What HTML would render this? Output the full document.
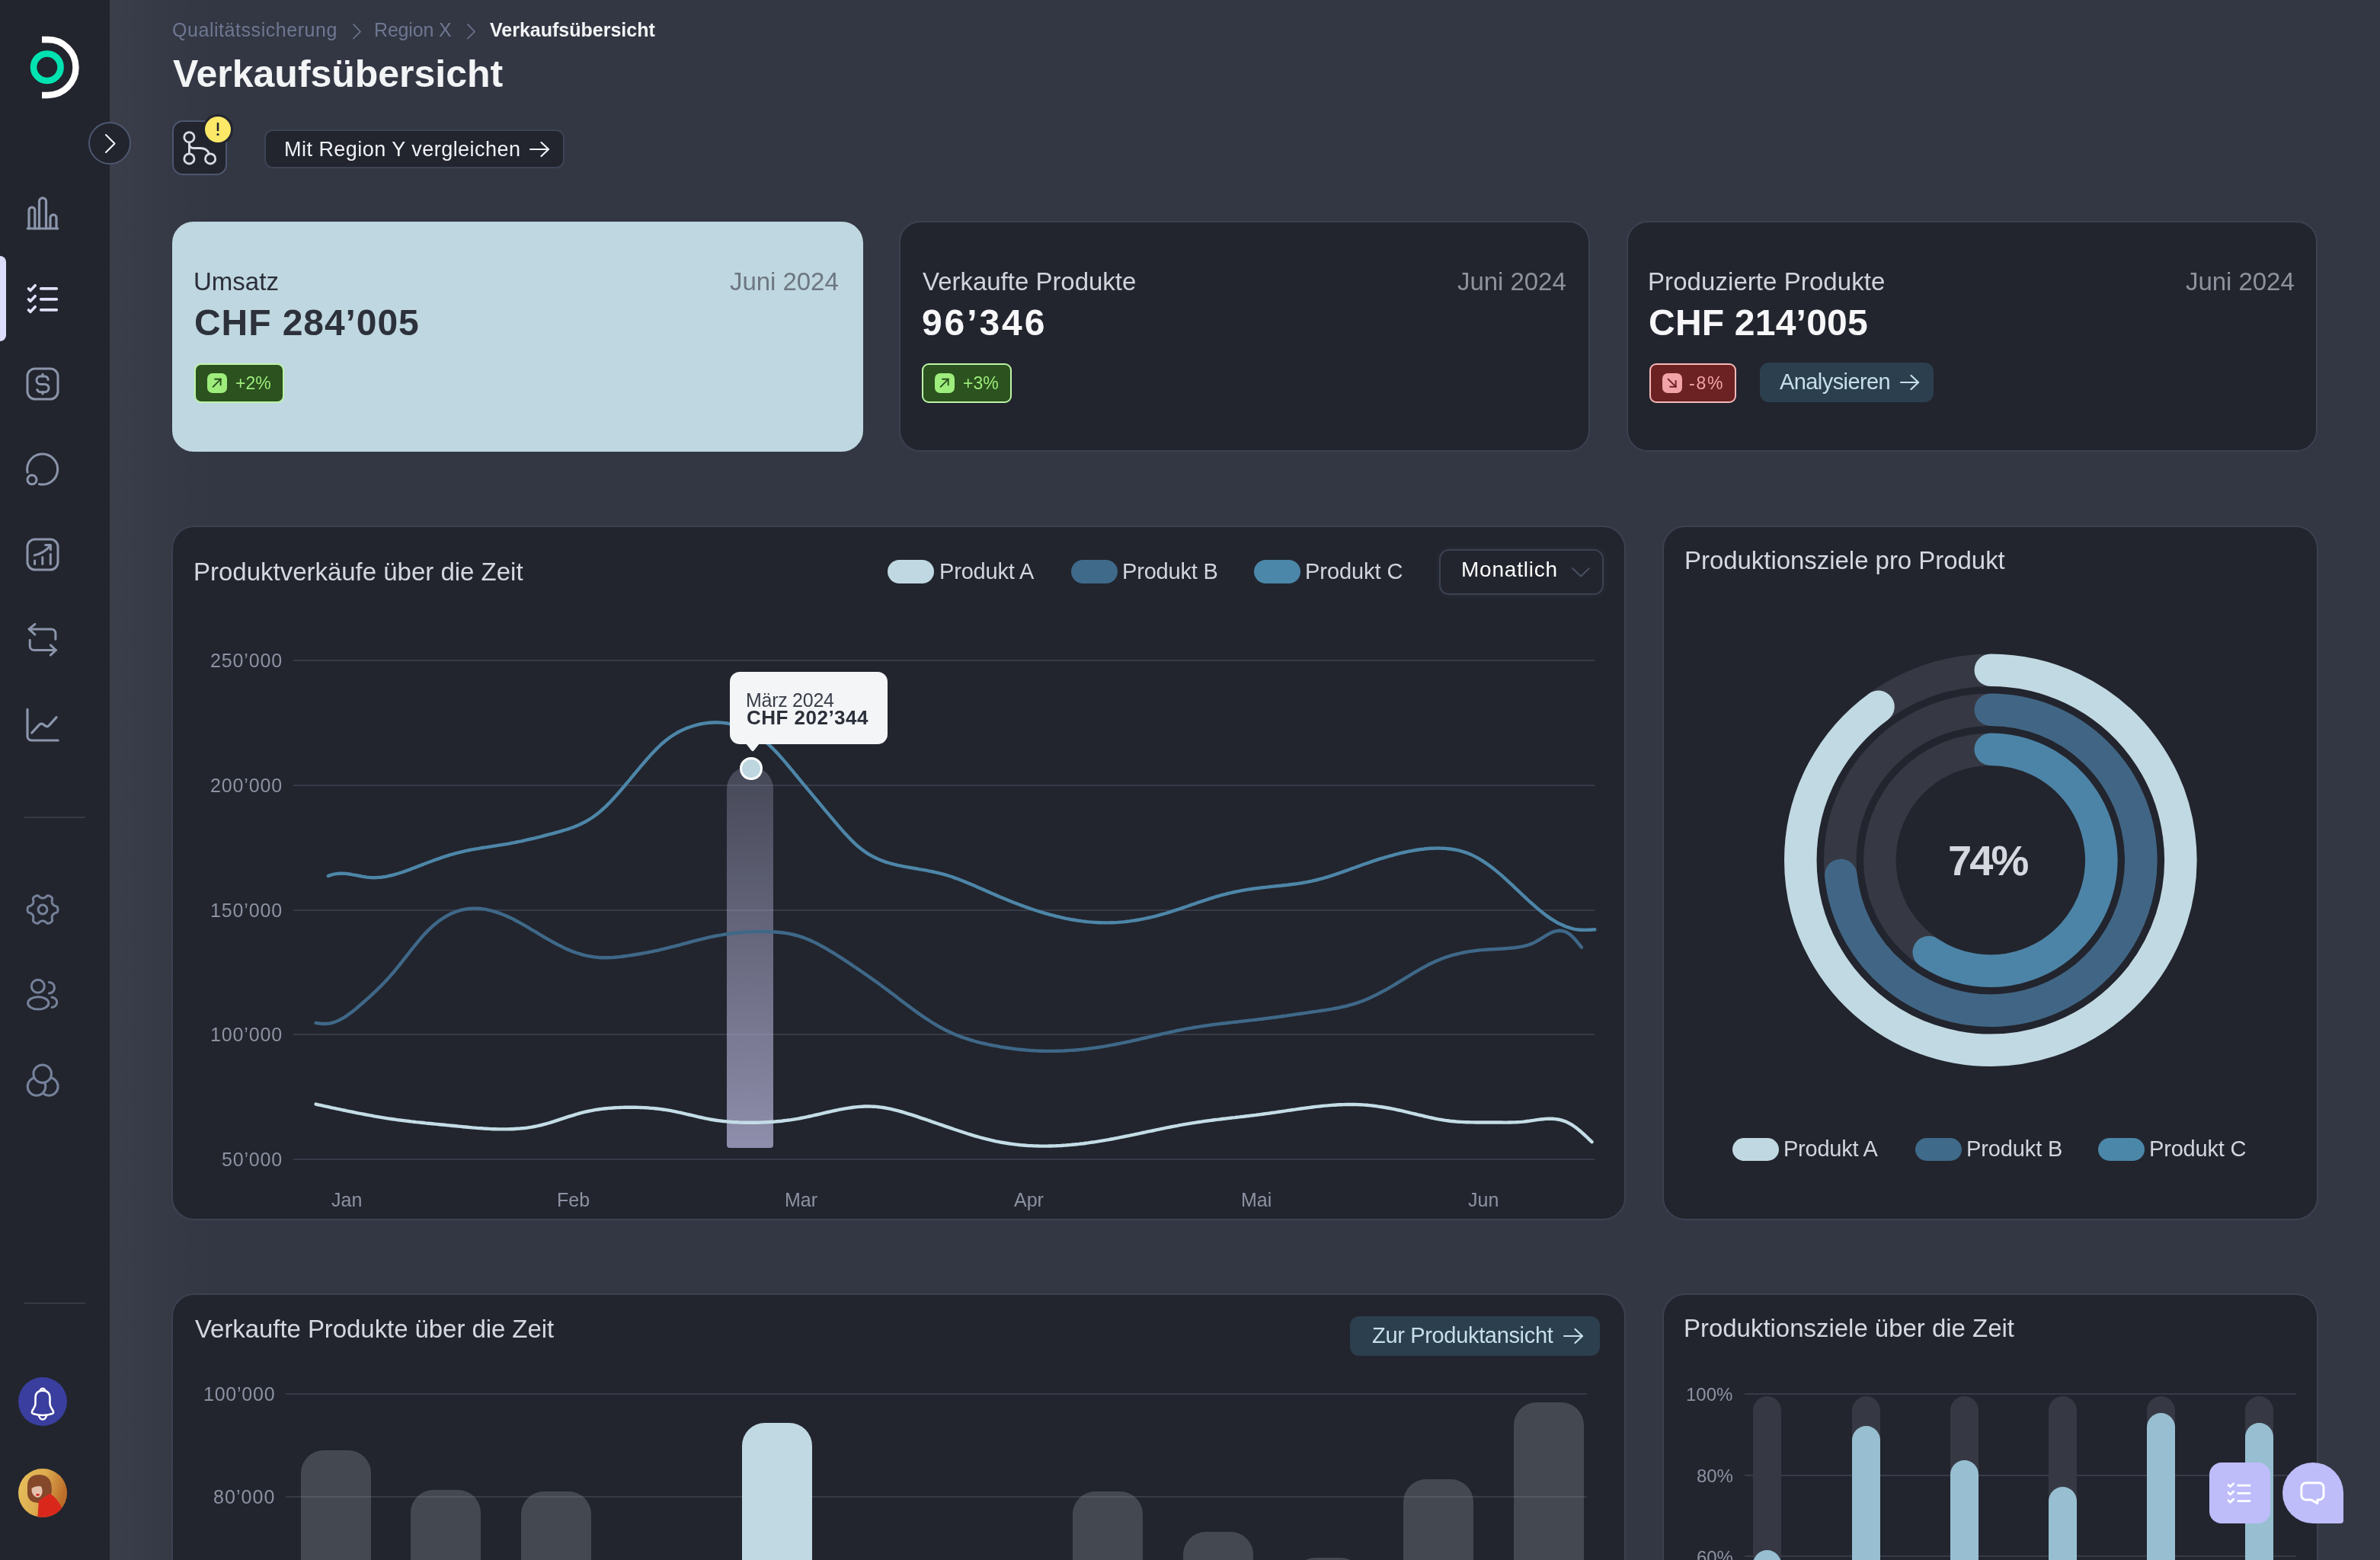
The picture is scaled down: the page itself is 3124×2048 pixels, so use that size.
<!DOCTYPE html>
<html><head><meta charset="utf-8"><title>Verkaufsübersicht</title>
<style>
html,body{margin:0;padding:0;}
body{width:3124px;height:2048px;overflow:hidden;position:relative;background:#333743;font-family:"Liberation Sans", sans-serif;}
.t{position:absolute;white-space:nowrap;line-height:1;will-change:transform;}
div{box-sizing:content-box;}
</style></head><body>
<div style="position:absolute;left:0;top:0;width:144px;height:2048px;background:#22252d"></div><div style="position:absolute;left:144px;top:0;width:140px;height:2048px;background:linear-gradient(90deg,rgba(255,255,255,0.04) 0%,rgba(255,255,255,0.015) 45%,rgba(255,255,255,0) 100%)"></div><svg style="position:absolute;left:0;top:0" width="144" height="160" viewBox="0 0 144 160"><circle cx="61.8" cy="88.2" r="17.75" fill="none" stroke="#00e3b1" stroke-width="8.6"/><path d="M55,52 H63 A36.5,36.5 0 0 1 63,125 H55" fill="none" stroke="#ffffff" stroke-width="8.4"/></svg><div style="position:absolute;left:0;top:336px;width:8px;height:112px;background:#dcdcfb;border-radius:0 8px 8px 0"></div><svg style="position:absolute;left:32.0px;top:256.0px" width="48.0" height="48.0" viewBox="0 0 24 24" fill="none" stroke="#8b95ab" stroke-width="1.6" stroke-linecap="round" stroke-linejoin="round"><path d="M2.1 22H21.9"/><path d="M3 22V10a1.95 1.95 0 0 1 3.9 0V22"/><path d="M9.75 22V4.15a2.25 2.25 0 0 1 4.5 0V22"/><path d="M17 22V14.95a2 2 0 0 1 4 0V22"/></svg><svg style="position:absolute;left:32.0px;top:368.0px" width="48.0" height="48.0" viewBox="0 0 24 24" fill="none" stroke="#e0e0fb" stroke-width="1.8" stroke-linecap="round" stroke-linejoin="round"><path d="M2.75 5.45L4 6.7L7.1 3.35"/><path d="M2.75 12.45L4 13.7L7.1 10.35"/><path d="M2.75 19.45L4 20.7L7.1 17.35"/><path d="M10.85 5.45H21.15"/><path d="M10.85 12.45H21.15"/><path d="M10.85 19.45H21.15"/></svg><svg style="position:absolute;left:32.0px;top:480.0px" width="48.0" height="48.0" viewBox="0 0 24 24" fill="none" stroke="#8b95ab" stroke-width="1.5" stroke-linecap="round" stroke-linejoin="round"><rect x="2" y="2" width="20" height="20" rx="5"/><path d="M15.6 9.2a2.6 2.6 0 0 0-2.4-2.2h-2.6a2.6 2.6 0 0 0 0 5.2h2.8a2.6 2.6 0 0 1 0 5.2h-2.6a2.6 2.6 0 0 1-2.4-1.6"/><path d="M12 5.6v1.4m0 10.4v1.1"/></svg><svg style="position:absolute;left:32.0px;top:592.0px" width="48.0" height="48.0" viewBox="0 0 24 24" fill="none" stroke="#8b95ab" stroke-width="1.5" stroke-linecap="round" stroke-linejoin="round"><path d="M2.05 14.05A10 10 0 1 1 9.7 21.8"/><circle cx="5" cy="18.85" r="3"/></svg><svg style="position:absolute;left:32.0px;top:704.0px" width="48.0" height="48.0" viewBox="0 0 24 24" fill="none" stroke="#8b95ab" stroke-width="1.5" stroke-linecap="round" stroke-linejoin="round"><rect x="2" y="2" width="20" height="20" rx="5"/><path d="M6.8 16V18.25"/><path d="M11.9 13.8V18.25"/><path d="M17.15 11.8V18.25"/><path d="M6.65 12.45Q13 11 16.85 6.35"/><path d="M13.8 5.8H17.2V8.9"/></svg><svg style="position:absolute;left:32.0px;top:816.0px" width="48.0" height="48.0" viewBox="0 0 24 24" fill="none" stroke="#8b95ab" stroke-width="1.5" stroke-linecap="round" stroke-linejoin="round"><path d="M6.95 1.65L3.05 4.95L6.95 8.55"/><path d="M3.05 4.95H17.7a2.75 2.75 0 0 1 2.75 2.75V11.6"/><path d="M3.6 12.15V16a2.75 2.75 0 0 0 2.75 2.75H20.7"/><path d="M17.15 15.45L20.7 18.75L17.15 22.05"/></svg><svg style="position:absolute;left:32.0px;top:928.0px" width="48.0" height="48.0" viewBox="0 0 24 24" fill="none" stroke="#8b95ab" stroke-width="1.6" stroke-linecap="round" stroke-linejoin="round"><path d="M2 1.7V19.3a2.7 2.7 0 0 0 2.7 2.7H22.1"/><path d="M4.9 17L9.6 11.9Q11 10.4 12.6 11.6L13.8 12.5Q15 13.4 16.2 12.2L21.05 6.8"/></svg><div style="position:absolute;left:32px;top:1072px;width:80px;height:2px;background:#363a46"></div><div style="position:absolute;left:32px;top:1710px;width:80px;height:2px;background:#363a46"></div><svg style="position:absolute;left:32.0px;top:1170.0px" width="48.0" height="48.0" viewBox="0 0 24 24" fill="none" stroke="#76829b" stroke-width="1.5" stroke-linecap="round" stroke-linejoin="round"><path d="M12.00 4.55 L12.26 4.53 L12.53 4.49 L12.80 4.41 L13.08 4.30 L13.38 4.16 L13.70 4.00 L14.05 3.78 L14.48 3.36 L14.92 3.01 L15.33 2.86 L15.69 2.86 L16.03 2.95 L16.36 3.07 L16.67 3.22 L16.97 3.38 L17.27 3.56 L17.56 3.76 L17.83 3.98 L18.07 4.24 L18.25 4.55 L18.33 4.97 L18.24 5.53 L18.09 6.12 L18.08 6.53 L18.10 6.89 L18.13 7.21 L18.18 7.51 L18.24 7.79 L18.34 8.04 L18.45 8.27 L18.60 8.49 L18.77 8.70 L18.97 8.90 L19.21 9.09 L19.48 9.28 L19.78 9.47 L20.14 9.67 L20.72 9.83 L21.25 10.03 L21.58 10.31 L21.76 10.63 L21.86 10.96 L21.91 11.31 L21.94 11.65 L21.95 12.00 L21.94 12.35 L21.91 12.69 L21.86 13.04 L21.76 13.37 L21.58 13.69 L21.25 13.97 L20.72 14.17 L20.14 14.33 L19.78 14.53 L19.48 14.72 L19.21 14.91 L18.97 15.10 L18.77 15.30 L18.60 15.51 L18.45 15.72 L18.34 15.96 L18.24 16.21 L18.18 16.49 L18.13 16.79 L18.10 17.11 L18.08 17.47 L18.09 17.88 L18.24 18.47 L18.33 19.03 L18.25 19.45 L18.07 19.76 L17.83 20.02 L17.56 20.24 L17.27 20.44 L16.97 20.62 L16.67 20.78 L16.36 20.93 L16.03 21.05 L15.69 21.14 L15.33 21.14 L14.92 20.99 L14.48 20.64 L14.05 20.22 L13.70 20.00 L13.38 19.84 L13.08 19.70 L12.80 19.59 L12.53 19.51 L12.26 19.47 L12.00 19.45 L11.74 19.47 L11.47 19.51 L11.20 19.59 L10.92 19.70 L10.62 19.84 L10.30 20.00 L9.95 20.22 L9.52 20.64 L9.08 20.99 L8.67 21.14 L8.31 21.14 L7.97 21.05 L7.64 20.93 L7.33 20.78 L7.02 20.62 L6.73 20.44 L6.44 20.24 L6.17 20.02 L5.93 19.76 L5.75 19.45 L5.67 19.03 L5.76 18.47 L5.91 17.88 L5.92 17.47 L5.90 17.11 L5.87 16.79 L5.82 16.49 L5.76 16.21 L5.66 15.96 L5.55 15.73 L5.40 15.51 L5.23 15.30 L5.03 15.10 L4.79 14.91 L4.52 14.72 L4.22 14.53 L3.86 14.33 L3.28 14.17 L2.75 13.97 L2.42 13.69 L2.24 13.37 L2.14 13.04 L2.09 12.69 L2.06 12.35 L2.05 12.00 L2.06 11.65 L2.09 11.31 L2.14 10.96 L2.24 10.63 L2.42 10.31 L2.75 10.03 L3.28 9.83 L3.86 9.67 L4.22 9.47 L4.52 9.28 L4.79 9.09 L5.03 8.90 L5.23 8.70 L5.40 8.49 L5.55 8.27 L5.66 8.04 L5.76 7.79 L5.82 7.51 L5.87 7.21 L5.90 6.89 L5.92 6.53 L5.91 6.12 L5.76 5.53 L5.67 4.97 L5.75 4.55 L5.93 4.24 L6.17 3.98 L6.44 3.76 L6.73 3.56 L7.02 3.38 L7.33 3.22 L7.64 3.07 L7.97 2.95 L8.31 2.86 L8.67 2.86 L9.08 3.01 L9.52 3.36 L9.95 3.78 L10.30 4.00 L10.62 4.16 L10.92 4.30 L11.20 4.41 L11.47 4.49 L11.74 4.53 L12.00 4.55Z"/><circle cx="12" cy="12" r="2.95"/></svg><svg style="position:absolute;left:32.0px;top:1281.0px" width="48.0" height="48.0" viewBox="0 0 24 24" fill="none" stroke="#76829b" stroke-width="1.5" stroke-linecap="round" stroke-linejoin="round"><circle cx="8.9" cy="6.85" r="4.25"/><ellipse cx="9.1" cy="17.95" rx="6.8" ry="4.1"/><path d="M16.15 4.2A3.6 3.65 0 0 1 16.15 11.5"/><path d="M18.05 14.1A3.5 3.33 0 0 1 18.05 20.75"/></svg><svg style="position:absolute;left:32.0px;top:1394.0px" width="48.0" height="48.0" viewBox="0 0 24 24" fill="none" stroke="#76829b" stroke-width="1.5" stroke-linecap="round" stroke-linejoin="round"><circle cx="16.15" cy="16.2" r="5.9" fill="#22252d"/><circle cx="8" cy="16.2" r="5.9" fill="#22252d"/><circle cx="11.85" cy="7.85" r="5.9" fill="#22252d"/></svg><div style="position:absolute;left:24px;top:1808px;width:64px;height:64px;border-radius:50%;background:#3a3e9e"></div><svg style="position:absolute;left:24px;top:1808px" width="64" height="64" viewBox="0 0 64 64" fill="none" stroke="#ffffff" stroke-width="2.6" stroke-linejoin="round" stroke-linecap="round"><path d="M29 16.5Q32 13 35 16.5"/><path d="M22.5 34.5V27.5Q22.5 17.8 32 17.5Q41.5 17.8 41.5 27.5V34.5Q41.5 37.5 43.5 40.5L45.8 44.5Q47.2 47.3 43.5 48.3Q38.5 50 32 50Q25.5 50 20.5 48.3Q16.8 47.3 18.2 44.5L20.5 40.5Q22.5 37.5 22.5 34.5Z"/><path d="M27 50.5Q28.5 55.5 32 55.5Q35.5 55.5 37 50.5"/></svg><svg style="position:absolute;left:24px;top:1928px" width="64" height="64" viewBox="0 0 64 64"><defs><clipPath id="avc"><circle cx="32" cy="32" r="32"/></clipPath><linearGradient id="avg" x1="0" y1="0" x2="1" y2="0.3"><stop offset="0" stop-color="#e9c25f"/><stop offset="0.55" stop-color="#dcaa4e"/><stop offset="1" stop-color="#bd6e2a"/></linearGradient></defs><g clip-path="url(#avc)"><rect width="64" height="64" fill="url(#avg)"/><path d="M12 23Q12 8 27.5 8Q42 8.5 43.5 22Q45 34 40.5 40Q35 45.5 25 45Q13 44 12 34Z" fill="#85482a"/><ellipse cx="24.5" cy="28.5" rx="7" ry="9.5" fill="#e5c2ad" transform="rotate(-12 24.5 28.5)"/><path d="M16.5 22Q24 14.5 34 19.5L34.5 25Q26 20.5 17 26Z" fill="#85482a"/><ellipse cx="25.5" cy="34.4" rx="2.5" ry="1.4" fill="#d4271f"/><path d="M25.3 66L26.8 43Q31 38.5 41.5 33Q50 37 57.5 52L54 66Z" fill="#d9271c"/></g></svg><svg style="position:absolute;left:461px;top:29.5px" width="16" height="22" viewBox="0 0 16 22" fill="none" stroke="#6e7791" stroke-width="1.7" stroke-linecap="round" stroke-linejoin="round"><path d="M3 2l9 9.5l-9 9"/></svg><svg style="position:absolute;left:611px;top:29.5px" width="16" height="22" viewBox="0 0 16 22" fill="none" stroke="#6e7791" stroke-width="1.7" stroke-linecap="round" stroke-linejoin="round"><path d="M3 2l9 9.5l-9 9"/></svg><div style="position:absolute;left:116px;top:160px;width:52px;height:52px;border-radius:50%;background:#22252e;border:2px solid #4d576f"></div><svg style="position:absolute;left:130px;top:170px" width="30" height="36" viewBox="0 0 30 36" fill="none" stroke="#f5f5f7" stroke-width="2" stroke-linecap="round" stroke-linejoin="round"><path d="M9 7l11.5 11.5L9 30"/></svg><div style="position:absolute;left:226px;top:158px;width:68px;height:68px;border-radius:14px;background:#22252e;border:2px solid #4d576f"></div><svg style="position:absolute;left:226px;top:158px" width="72" height="72" viewBox="0 0 72 72" fill="none" stroke="#d9dbe2" stroke-width="2.8" stroke-linecap="round" stroke-linejoin="round"><circle cx="22.4" cy="22.2" r="6.6"/><circle cx="22.4" cy="50.4" r="6.6"/><circle cx="50.1" cy="50.4" r="6.6"/><path d="M22.4 28.8V43.8"/><path d="M22.4 31c0 3.5 2 5.5 6 5.5h8.5c5.5 0 9.5 2 11.5 7.4"/></svg><div style="position:absolute;left:266.3px;top:150px;width:40px;height:40px;border-radius:50%;background:#22252e"></div><div style="position:absolute;left:269.3px;top:153px;width:34px;height:34px;border-radius:50%;background:#fde868"></div><svg style="position:absolute;left:269.3px;top:153px" width="34" height="34" viewBox="0 0 34 34"><path d="M17 9v9" stroke="#22252e" stroke-width="2.6" stroke-linecap="round"/><circle cx="17" cy="23.5" r="1.6" fill="#22252e"/></svg><div style="position:absolute;left:346.5px;top:170px;width:390.5px;height:47px;border-radius:11px;background:#22252e;border:2px solid #3e4454"></div><svg style="position:absolute;left:694.0px;top:184.5px" width="28.0" height="22" viewBox="-2 -2 28.0 22" fill="none" stroke="#f0f1f5" stroke-width="2.2" stroke-linecap="round" stroke-linejoin="round"><path d="M0 9.0H24"/><path d="M14.5 0.0L24 9.0L14.5 18.0"/></svg><div style="position:absolute;left:226px;top:291px;width:903px;height:297.5px;border-radius:28px;background:#bfd7e0;border:2px solid #bfd7e0"></div><div style="position:absolute;left:1179.5px;top:290px;width:903px;height:299px;border-radius:28px;background:#22252e;border:2px solid #3c4151"></div><div style="position:absolute;left:2135px;top:290px;width:903px;height:299px;border-radius:28px;background:#22252e;border:2px solid #3c4151"></div><div style="position:absolute;left:255px;top:476.5px;width:113.5px;height:48px;border-radius:9px;background:#2b521f;border:2px solid #bdf5a6"></div><div style="position:absolute;left:272.2px;top:490px;width:25.5px;height:25.5px;border-radius:7px;background:#9eed7c"></div><svg style="position:absolute;left:272.2px;top:490px" width="25.5" height="25.5" viewBox="0 0 26 26" fill="none" stroke="#2b521f" stroke-width="2" stroke-linecap="square"><path d="M8 18L18 8"/><path d="M10.5 8H18v7.5"/></svg><div style="position:absolute;left:1210px;top:476.5px;width:113.5px;height:48px;border-radius:9px;background:#2b521f;border:2px solid #bdf5a6"></div><div style="position:absolute;left:1227.2px;top:490px;width:25.5px;height:25.5px;border-radius:7px;background:#9eed7c"></div><svg style="position:absolute;left:1227.2px;top:490px" width="25.5" height="25.5" viewBox="0 0 26 26" fill="none" stroke="#2b521f" stroke-width="2" stroke-linecap="square"><path d="M8 18L18 8"/><path d="M10.5 8H18v7.5"/></svg><div style="position:absolute;left:2165px;top:476.5px;width:109.6px;height:48px;border-radius:9px;background:#6c2222;border:2px solid #f6b9b9"></div><div style="position:absolute;left:2182.2px;top:490px;width:25.5px;height:25.5px;border-radius:7px;background:#f2a3a8"></div><svg style="position:absolute;left:2182.2px;top:490px" width="25.5" height="25.5" viewBox="0 0 26 26" fill="none" stroke="#6c2222" stroke-width="2" stroke-linecap="square"><path d="M8 8l10 10"/><path d="M18 10.5V18h-7.5"/></svg><div style="position:absolute;left:2310px;top:476px;width:228px;height:52px;border-radius:12px;background:#2c3f4e"></div><svg style="position:absolute;left:2493.0px;top:490.5px" width="27.0" height="22" viewBox="-2 -2 27.0 22" fill="none" stroke="#c6dfe9" stroke-width="2.2" stroke-linecap="round" stroke-linejoin="round"><path d="M0 9.0H23"/><path d="M13.5 0.0L23 9.0L13.5 18.0"/></svg><div style="position:absolute;left:225px;top:690px;width:1905px;height:908px;border-radius:30px;background:#22252e;border:2px solid #3c4151"></div><div style="position:absolute;left:1165.3px;top:735px;width:61px;height:31px;border-radius:16px;background:#c0d8e1"></div><div style="position:absolute;left:1405.7px;top:735px;width:61px;height:31px;border-radius:16px;background:#3f6a8a"></div><div style="position:absolute;left:1645.6px;top:735px;width:61px;height:31px;border-radius:16px;background:#4b87a9"></div><div style="position:absolute;left:1888.6px;top:721px;width:212px;height:55.6px;border-radius:13px;background:#22252e;border:2px solid #3c4252;box-shadow:0 0 10px rgba(120,130,150,0.12)"></div><svg style="position:absolute;left:2060px;top:740px" width="30" height="22" viewBox="0 0 30 22" fill="none" stroke="#4b5264" stroke-width="1.8" stroke-linecap="round" stroke-linejoin="round"><path d="M4 6l11 10.5L26 6"/></svg><div style="position:absolute;left:384.6px;top:865.8px;width:1708px;height:2px;background:#373b48"></div><div style="position:absolute;left:384.6px;top:1029.6px;width:1708px;height:2px;background:#373b48"></div><div style="position:absolute;left:384.6px;top:1193.5px;width:1708px;height:2px;background:#373b48"></div><div style="position:absolute;left:384.6px;top:1357.3px;width:1708px;height:2px;background:#373b48"></div><div style="position:absolute;left:384.6px;top:1521.2px;width:1708px;height:2px;background:#373b48"></div><div style="position:absolute;left:954px;top:1006px;width:60.5px;height:500.7px;border-radius:30px 30px 4px 4px;background:linear-gradient(180deg,rgba(150,152,180,0.3) 0%,rgba(185,182,220,0.72) 100%)"></div><svg style="position:absolute;left:0;top:0" width="3124" height="2048" viewBox="0 0 3124 2048" fill="none" stroke-width="4.4" stroke-linecap="round" stroke-linejoin="round"><path d="M414.6 1343.0 L417.8 1343.4 L421.1 1343.8 L424.3 1344.0 L427.6 1344.0 L430.8 1343.8 L433.9 1343.3 L436.9 1342.5 L440.0 1341.5 L443.1 1340.3 L446.2 1338.8 L449.2 1337.1 L452.3 1335.3 L455.4 1333.3 L458.5 1331.1 L461.5 1328.8 L464.6 1326.4 L467.7 1323.9 L470.8 1321.3 L473.8 1318.7 L476.9 1316.0 L480.1 1313.2 L483.3 1310.3 L486.5 1307.4 L489.7 1304.4 L492.9 1301.4 L496.1 1298.2 L499.4 1295.1 L502.6 1291.8 L505.8 1288.4 L509.0 1285.0 L512.2 1281.4 L515.4 1277.7 L518.5 1274.1 L521.5 1270.3 L524.6 1266.5 L527.7 1262.6 L530.8 1258.7 L533.8 1254.8 L536.9 1250.8 L540.0 1246.9 L543.1 1243.1 L546.1 1239.3 L549.2 1235.6 L552.3 1231.9 L555.4 1228.4 L558.4 1225.1 L561.5 1221.9 L564.7 1218.8 L567.8 1215.9 L571.0 1213.2 L574.2 1210.6 L577.4 1208.2 L580.5 1206.1 L583.7 1204.1 L586.9 1202.2 L590.0 1200.6 L593.2 1199.1 L596.4 1197.7 L599.5 1196.5 L602.7 1195.5 L605.9 1194.7 L609.1 1194.0 L612.2 1193.4 L615.4 1193.0 L618.6 1192.7 L621.7 1192.6 L624.9 1192.6 L628.1 1192.8 L631.2 1193.0 L634.4 1193.4 L637.6 1193.9 L640.7 1194.6 L643.9 1195.3 L647.0 1196.1 L650.2 1197.1 L653.4 1198.1 L656.5 1199.2 L659.7 1200.5 L662.9 1201.8 L666.0 1203.1 L669.2 1204.6 L672.3 1206.1 L675.4 1207.6 L678.4 1209.3 L681.5 1210.9 L684.6 1212.6 L687.7 1214.4 L690.8 1216.1 L693.8 1217.9 L696.9 1219.8 L700.0 1221.6 L703.1 1223.4 L706.2 1225.3 L709.2 1227.1 L712.3 1229.0 L715.4 1230.8 L718.5 1232.6 L721.6 1234.4 L724.6 1236.1 L727.7 1237.8 L730.8 1239.5 L733.9 1241.1 L737.0 1242.6 L740.0 1244.1 L743.1 1245.6 L746.2 1246.9 L749.3 1248.2 L752.3 1249.4 L755.4 1250.5 L758.5 1251.5 L761.6 1252.4 L764.6 1253.3 L767.7 1254.1 L770.8 1254.8 L773.9 1255.4 L776.9 1255.9 L780.0 1256.4 L783.1 1256.7 L786.2 1257.0 L789.2 1257.2 L792.3 1257.3 L795.4 1257.3 L798.5 1257.3 L801.5 1257.1 L804.6 1257.0 L807.7 1256.7 L810.8 1256.4 L813.8 1256.1 L816.9 1255.7 L820.0 1255.3 L823.0 1254.9 L826.1 1254.4 L829.1 1254.0 L832.1 1253.5 L835.2 1253.0 L838.2 1252.5 L841.3 1252.0 L844.3 1251.4 L847.3 1250.9 L850.4 1250.3 L853.4 1249.7 L856.4 1249.1 L859.5 1248.4 L862.5 1247.8 L865.6 1247.1 L868.6 1246.4 L871.6 1245.7 L874.7 1244.9 L877.7 1244.2 L880.7 1243.4 L883.8 1242.7 L886.8 1241.9 L889.8 1241.1 L892.9 1240.3 L895.9 1239.4 L899.0 1238.6 L902.0 1237.8 L905.0 1237.0 L908.1 1236.2 L911.1 1235.4 L914.1 1234.6 L917.2 1233.8 L920.2 1233.1 L923.3 1232.3 L926.3 1231.6 L929.3 1230.9 L932.4 1230.2 L935.4 1229.6 L938.4 1229.0 L941.4 1228.4 L944.4 1227.9 L947.4 1227.3 L950.4 1226.8 L953.5 1226.4 L956.5 1226.0 L959.5 1225.5 L962.5 1225.2 L965.5 1224.8 L968.5 1224.5 L971.5 1224.2 L974.5 1224.0 L977.5 1223.7 L980.5 1223.5 L983.5 1223.4 L986.5 1223.2 L989.6 1223.1 L992.6 1223.0 L995.6 1223.0 L998.6 1223.0 L1001.6 1223.0 L1004.6 1223.0 L1007.7 1223.1 L1010.8 1223.2 L1013.8 1223.3 L1016.9 1223.5 L1020.0 1223.7 L1023.1 1224.0 L1026.2 1224.3 L1029.2 1224.7 L1032.3 1225.2 L1035.4 1225.7 L1038.5 1226.3 L1041.6 1227.0 L1044.6 1227.8 L1047.7 1228.6 L1050.8 1229.6 L1053.8 1230.6 L1056.9 1231.8 L1059.9 1233.0 L1062.9 1234.3 L1066.0 1235.6 L1069.0 1237.1 L1072.1 1238.6 L1075.1 1240.1 L1078.1 1241.8 L1081.2 1243.5 L1084.2 1245.2 L1087.2 1247.0 L1090.3 1248.8 L1093.3 1250.7 L1096.4 1252.6 L1099.4 1254.5 L1102.4 1256.4 L1105.5 1258.4 L1108.5 1260.4 L1111.5 1262.4 L1114.6 1264.4 L1117.6 1266.4 L1120.6 1268.5 L1123.7 1270.5 L1126.7 1272.6 L1129.8 1274.7 L1132.8 1276.8 L1135.8 1278.9 L1138.9 1281.0 L1141.9 1283.1 L1144.9 1285.3 L1148.0 1287.4 L1151.0 1289.6 L1154.1 1291.8 L1157.1 1294.0 L1160.1 1296.3 L1163.2 1298.5 L1166.2 1300.8 L1169.4 1303.2 L1172.6 1305.6 L1175.8 1308.1 L1179.0 1310.5 L1182.2 1312.9 L1185.4 1315.4 L1188.6 1317.8 L1191.8 1320.2 L1195.0 1322.6 L1198.2 1325.0 L1201.4 1327.3 L1204.6 1329.6 L1207.8 1331.9 L1211.0 1334.1 L1214.3 1336.3 L1217.5 1338.4 L1220.7 1340.5 L1223.9 1342.5 L1227.1 1344.5 L1230.3 1346.4 L1233.6 1348.2 L1236.8 1350.0 L1240.0 1351.7 L1243.1 1353.2 L1246.1 1354.7 L1249.2 1356.1 L1252.2 1357.4 L1255.3 1358.7 L1258.3 1359.9 L1261.4 1361.1 L1264.4 1362.2 L1267.5 1363.2 L1270.5 1364.2 L1273.6 1365.2 L1276.6 1366.1 L1279.7 1367.0 L1282.7 1367.8 L1285.8 1368.6 L1288.8 1369.3 L1291.9 1370.0 L1294.9 1370.7 L1298.0 1371.4 L1301.0 1372.0 L1304.1 1372.6 L1307.2 1373.2 L1310.2 1373.7 L1313.3 1374.3 L1316.4 1374.8 L1319.4 1375.3 L1322.5 1375.7 L1325.6 1376.2 L1328.6 1376.6 L1331.7 1377.0 L1334.8 1377.4 L1337.8 1377.7 L1340.9 1378.0 L1343.9 1378.3 L1347.0 1378.6 L1350.1 1378.8 L1353.1 1379.1 L1356.2 1379.3 L1359.3 1379.4 L1362.3 1379.6 L1365.4 1379.7 L1368.5 1379.8 L1371.5 1379.9 L1374.6 1379.9 L1377.7 1379.9 L1380.8 1379.9 L1383.9 1379.9 L1387.0 1379.8 L1390.1 1379.7 L1393.2 1379.6 L1396.3 1379.5 L1399.4 1379.3 L1402.5 1379.1 L1405.6 1378.9 L1408.7 1378.7 L1411.8 1378.5 L1414.9 1378.2 L1418.0 1377.9 L1421.0 1377.6 L1424.1 1377.2 L1427.2 1376.9 L1430.3 1376.5 L1433.4 1376.1 L1436.5 1375.7 L1439.6 1375.2 L1442.7 1374.8 L1445.8 1374.3 L1448.9 1373.8 L1452.0 1373.3 L1455.1 1372.7 L1458.2 1372.2 L1461.3 1371.6 L1464.4 1371.0 L1467.4 1370.4 L1470.4 1369.8 L1473.4 1369.2 L1476.4 1368.6 L1479.4 1367.9 L1482.4 1367.3 L1485.4 1366.6 L1488.4 1365.9 L1491.4 1365.3 L1494.4 1364.6 L1497.4 1363.9 L1500.4 1363.2 L1503.4 1362.5 L1506.4 1361.8 L1509.4 1361.1 L1512.5 1360.4 L1515.5 1359.7 L1518.5 1359.0 L1521.5 1358.3 L1524.5 1357.6 L1527.5 1356.9 L1530.5 1356.3 L1533.5 1355.6 L1536.5 1354.9 L1539.5 1354.3 L1542.5 1353.7 L1545.5 1353.0 L1548.5 1352.4 L1551.5 1351.8 L1554.5 1351.2 L1557.5 1350.7 L1560.5 1350.1 L1563.5 1349.6 L1566.5 1349.0 L1569.5 1348.5 L1572.6 1348.1 L1575.6 1347.6 L1578.6 1347.1 L1581.6 1346.7 L1584.6 1346.3 L1587.6 1345.8 L1590.7 1345.4 L1593.7 1345.0 L1596.7 1344.6 L1599.7 1344.3 L1602.7 1343.9 L1605.7 1343.5 L1608.7 1343.2 L1611.8 1342.8 L1614.8 1342.5 L1617.8 1342.1 L1620.8 1341.8 L1623.8 1341.5 L1626.8 1341.1 L1629.8 1340.8 L1632.9 1340.5 L1635.9 1340.1 L1638.9 1339.8 L1641.9 1339.4 L1644.9 1339.1 L1647.9 1338.7 L1651.0 1338.4 L1654.0 1338.0 L1657.0 1337.7 L1660.0 1337.3 L1663.1 1336.9 L1666.1 1336.5 L1669.2 1336.1 L1672.2 1335.7 L1675.3 1335.3 L1678.3 1334.9 L1681.4 1334.5 L1684.4 1334.0 L1687.5 1333.6 L1690.5 1333.2 L1693.6 1332.7 L1696.6 1332.3 L1699.7 1331.8 L1702.7 1331.4 L1705.8 1331.0 L1708.8 1330.5 L1711.9 1330.1 L1714.9 1329.6 L1718.0 1329.2 L1721.0 1328.7 L1724.1 1328.3 L1727.2 1327.9 L1730.2 1327.4 L1733.3 1327.0 L1736.3 1326.5 L1739.4 1326.1 L1742.4 1325.6 L1745.5 1325.1 L1748.5 1324.6 L1751.6 1324.0 L1754.6 1323.5 L1757.7 1322.9 L1760.7 1322.2 L1763.8 1321.5 L1766.8 1320.8 L1769.9 1320.0 L1772.9 1319.2 L1776.0 1318.3 L1779.0 1317.4 L1782.1 1316.4 L1785.1 1315.3 L1788.2 1314.2 L1791.2 1313.0 L1794.2 1311.8 L1797.2 1310.4 L1800.2 1309.1 L1803.2 1307.6 L1806.2 1306.2 L1809.2 1304.6 L1812.2 1303.0 L1815.3 1301.4 L1818.3 1299.8 L1821.3 1298.1 L1824.3 1296.3 L1827.3 1294.6 L1830.3 1292.8 L1833.3 1291.0 L1836.3 1289.2 L1839.3 1287.4 L1842.3 1285.5 L1845.3 1283.7 L1848.3 1281.9 L1851.3 1280.0 L1854.3 1278.2 L1857.3 1276.4 L1860.3 1274.6 L1863.4 1272.9 L1866.4 1271.2 L1869.4 1269.5 L1872.4 1267.9 L1875.4 1266.3 L1878.4 1264.8 L1881.4 1263.4 L1884.4 1262.0 L1887.5 1260.7 L1890.5 1259.4 L1893.6 1258.2 L1896.6 1257.1 L1899.7 1256.1 L1902.7 1255.1 L1905.8 1254.2 L1908.8 1253.4 L1911.9 1252.6 L1914.9 1251.8 L1918.0 1251.2 L1921.0 1250.5 L1924.1 1249.9 L1927.1 1249.4 L1930.2 1248.9 L1933.2 1248.5 L1936.3 1248.1 L1939.3 1247.7 L1942.4 1247.4 L1945.4 1247.1 L1948.5 1246.9 L1951.5 1246.7 L1954.5 1246.5 L1957.5 1246.3 L1960.5 1246.2 L1963.5 1246.0 L1966.5 1245.8 L1969.5 1245.7 L1972.5 1245.5 L1975.6 1245.3 L1978.6 1245.1 L1981.6 1244.8 L1984.6 1244.5 L1987.6 1244.2 L1990.6 1243.8 L1993.6 1243.3 L1996.6 1242.8 L1999.8 1242.2 L2003.0 1241.4 L2006.2 1240.5 L2009.4 1239.4 L2012.6 1238.0 L2015.8 1236.4 L2019.0 1234.5 L2022.2 1232.6 L2025.4 1230.6 L2028.6 1228.6 L2031.8 1226.7 L2035.0 1225.1 L2038.2 1223.6 L2041.4 1222.6 L2044.6 1222.0 L2047.8 1221.8 L2051.0 1222.2 L2054.2 1223.1 L2057.4 1224.6 L2060.6 1226.7 L2063.7 1229.4 L2066.8 1232.5 L2069.8 1236.0 L2072.9 1239.8 L2076.0 1243.7" stroke="#3f6888"/><path d="M430.8 1150.0 L434.6 1148.7 L438.5 1147.7 L441.6 1147.1 L444.6 1146.8 L447.7 1146.7 L450.8 1146.7 L453.9 1146.9 L456.9 1147.3 L460.0 1147.7 L463.1 1148.3 L466.2 1148.8 L469.2 1149.4 L472.3 1150.0 L475.4 1150.6 L478.5 1151.1 L481.5 1151.6 L484.6 1151.9 L487.7 1152.1 L490.8 1152.2 L493.8 1152.1 L496.9 1151.9 L500.0 1151.7 L503.1 1151.3 L506.2 1150.8 L509.2 1150.2 L512.3 1149.5 L515.4 1148.8 L518.6 1147.9 L521.8 1147.0 L525.0 1146.0 L528.2 1145.0 L531.4 1143.9 L534.6 1142.7 L537.8 1141.6 L541.0 1140.3 L544.2 1139.1 L547.4 1137.9 L550.6 1136.6 L553.8 1135.4 L556.9 1134.2 L560.0 1133.0 L563.2 1131.8 L566.3 1130.7 L569.4 1129.5 L572.5 1128.4 L575.7 1127.3 L578.8 1126.2 L581.9 1125.2 L585.0 1124.2 L588.2 1123.2 L591.3 1122.2 L594.4 1121.3 L597.5 1120.4 L600.7 1119.6 L603.8 1118.8 L606.9 1118.1 L610.0 1117.3 L613.1 1116.7 L616.3 1116.0 L619.4 1115.4 L622.5 1114.8 L625.6 1114.3 L628.7 1113.8 L631.8 1113.2 L634.9 1112.8 L638.1 1112.3 L641.2 1111.8 L644.3 1111.3 L647.4 1110.8 L650.5 1110.4 L653.6 1109.9 L656.7 1109.4 L659.9 1108.9 L663.0 1108.4 L666.1 1107.9 L669.2 1107.3 L672.2 1106.7 L675.3 1106.2 L678.3 1105.5 L681.3 1104.9 L684.4 1104.3 L687.4 1103.6 L690.5 1102.9 L693.5 1102.2 L696.5 1101.5 L699.6 1100.8 L702.6 1100.1 L705.6 1099.3 L708.7 1098.6 L711.7 1097.8 L714.8 1097.0 L717.8 1096.2 L720.8 1095.4 L723.9 1094.6 L726.9 1093.8 L729.9 1093.0 L733.0 1092.2 L736.0 1091.3 L739.0 1090.4 L742.1 1089.5 L745.1 1088.6 L748.2 1087.5 L751.2 1086.5 L754.2 1085.3 L757.3 1084.1 L760.3 1082.8 L763.3 1081.3 L766.4 1079.8 L769.4 1078.2 L772.5 1076.4 L775.5 1074.5 L778.5 1072.5 L781.6 1070.3 L784.6 1068.0 L787.8 1065.4 L791.0 1062.5 L794.3 1059.6 L797.5 1056.4 L800.7 1053.2 L803.9 1049.8 L807.1 1046.3 L810.3 1042.7 L813.6 1039.0 L816.8 1035.3 L820.0 1031.5 L823.0 1027.9 L826.0 1024.3 L829.0 1020.7 L832.0 1017.0 L835.0 1013.4 L838.0 1009.8 L841.0 1006.2 L844.0 1002.7 L847.0 999.2 L850.0 995.7 L853.0 992.4 L856.0 989.1 L859.0 986.0 L862.0 982.9 L865.0 980.0 L868.0 977.2 L871.0 974.5 L874.0 972.0 L877.0 969.7 L880.0 967.5 L883.0 965.5 L886.0 963.6 L889.0 961.8 L892.0 960.2 L895.0 958.7 L898.0 957.4 L901.0 956.1 L904.0 955.0 L907.0 954.0 L910.0 953.0 L913.2 952.1 L916.5 951.2 L919.8 950.5 L923.0 949.9 L926.2 949.4 L929.5 949.0 L932.8 948.7 L936.0 948.5 L939.1 948.4 L942.3 948.5 L945.4 948.6 L948.6 948.9 L951.7 949.2 L954.9 949.7 L958.0 950.3 L961.1 951.0 L964.1 951.7 L967.2 952.6 L970.2 953.6 L973.3 954.7 L976.4 956.0 L979.4 957.3 L982.5 958.8 L985.5 960.4 L988.6 962.2 L991.6 964.1 L994.7 966.1 L997.8 968.3 L1000.8 970.6 L1003.9 973.0 L1006.9 975.6 L1010.0 978.4 L1013.0 981.3 L1016.0 984.3 L1019.0 987.4 L1022.0 990.6 L1025.0 994.0 L1028.0 997.4 L1031.0 1000.9 L1034.0 1004.5 L1037.0 1008.1 L1040.0 1011.7 L1043.0 1015.3 L1046.0 1019.0 L1049.0 1022.6 L1052.0 1026.3 L1055.0 1029.9 L1058.0 1033.5 L1061.0 1037.1 L1064.0 1040.7 L1067.0 1044.3 L1070.0 1047.9 L1073.0 1051.5 L1076.0 1055.1 L1079.0 1058.7 L1082.0 1062.3 L1085.0 1065.9 L1088.0 1069.4 L1091.0 1073.0 L1094.1 1076.6 L1097.1 1080.3 L1100.2 1083.9 L1103.2 1087.4 L1106.3 1090.9 L1109.3 1094.3 L1112.4 1097.6 L1115.5 1100.8 L1118.5 1103.9 L1121.6 1106.9 L1124.6 1109.7 L1127.7 1112.3 L1130.7 1114.7 L1133.8 1117.0 L1136.8 1119.1 L1139.8 1121.1 L1142.9 1122.9 L1145.9 1124.5 L1149.0 1126.1 L1152.0 1127.5 L1155.0 1128.8 L1158.1 1130.0 L1161.1 1131.1 L1164.1 1132.1 L1167.2 1133.0 L1170.2 1133.9 L1173.3 1134.7 L1176.3 1135.4 L1179.3 1136.1 L1182.4 1136.7 L1185.4 1137.3 L1188.4 1137.9 L1191.5 1138.4 L1194.5 1139.0 L1197.5 1139.5 L1200.6 1140.0 L1203.6 1140.5 L1206.6 1141.1 L1209.7 1141.6 L1212.7 1142.1 L1215.7 1142.7 L1218.8 1143.3 L1221.8 1143.9 L1224.8 1144.5 L1227.9 1145.1 L1230.9 1145.8 L1233.9 1146.6 L1237.0 1147.4 L1240.0 1148.2 L1243.1 1149.1 L1246.1 1150.0 L1249.2 1151.0 L1252.2 1152.1 L1255.3 1153.2 L1258.3 1154.3 L1261.4 1155.5 L1264.4 1156.7 L1267.5 1157.9 L1270.5 1159.2 L1273.6 1160.4 L1276.6 1161.7 L1279.7 1163.1 L1282.7 1164.4 L1285.8 1165.7 L1288.8 1167.1 L1291.9 1168.4 L1294.9 1169.8 L1298.0 1171.1 L1301.0 1172.5 L1304.1 1173.8 L1307.2 1175.1 L1310.2 1176.4 L1313.3 1177.7 L1316.3 1179.0 L1319.4 1180.3 L1322.4 1181.5 L1325.5 1182.8 L1328.5 1184.0 L1331.6 1185.2 L1334.6 1186.3 L1337.7 1187.5 L1340.7 1188.6 L1343.8 1189.8 L1346.8 1190.9 L1349.9 1191.9 L1352.9 1193.0 L1356.0 1194.0 L1359.0 1195.0 L1362.1 1196.0 L1365.1 1197.0 L1368.2 1197.9 L1371.3 1198.8 L1374.4 1199.7 L1377.5 1200.6 L1380.6 1201.4 L1383.7 1202.2 L1386.8 1203.0 L1389.9 1203.7 L1392.9 1204.4 L1396.0 1205.1 L1399.1 1205.8 L1402.2 1206.4 L1405.3 1207.0 L1408.4 1207.5 L1411.5 1208.0 L1414.6 1208.5 L1417.7 1208.9 L1420.8 1209.4 L1423.9 1209.7 L1427.0 1210.1 L1430.1 1210.4 L1433.2 1210.6 L1436.2 1210.9 L1439.3 1211.0 L1442.4 1211.2 L1445.5 1211.3 L1448.6 1211.4 L1451.7 1211.4 L1454.8 1211.4 L1457.9 1211.3 L1461.0 1211.2 L1464.0 1211.1 L1467.1 1210.9 L1470.2 1210.6 L1473.2 1210.4 L1476.3 1210.1 L1479.4 1209.7 L1482.5 1209.4 L1485.5 1208.9 L1488.6 1208.5 L1491.7 1208.0 L1494.7 1207.5 L1497.8 1206.9 L1500.9 1206.3 L1503.9 1205.7 L1507.0 1205.0 L1510.1 1204.3 L1513.2 1203.6 L1516.2 1202.8 L1519.3 1202.1 L1522.4 1201.2 L1525.4 1200.4 L1528.5 1199.5 L1531.6 1198.6 L1534.7 1197.6 L1537.7 1196.7 L1540.8 1195.7 L1543.9 1194.7 L1547.0 1193.7 L1550.1 1192.6 L1553.1 1191.6 L1556.2 1190.5 L1559.3 1189.5 L1562.4 1188.4 L1565.5 1187.3 L1568.5 1186.3 L1571.6 1185.2 L1574.7 1184.2 L1577.8 1183.1 L1580.9 1182.1 L1584.0 1181.1 L1587.0 1180.1 L1590.1 1179.1 L1593.2 1178.1 L1596.3 1177.2 L1599.4 1176.3 L1602.4 1175.4 L1605.5 1174.6 L1608.6 1173.8 L1611.6 1173.0 L1614.6 1172.3 L1617.7 1171.6 L1620.7 1171.0 L1623.7 1170.4 L1626.7 1169.8 L1629.8 1169.2 L1632.8 1168.7 L1635.8 1168.2 L1638.8 1167.7 L1641.9 1167.2 L1644.9 1166.8 L1647.9 1166.4 L1650.9 1166.0 L1654.0 1165.6 L1657.0 1165.2 L1660.0 1164.9 L1663.1 1164.6 L1666.1 1164.2 L1669.2 1163.9 L1672.2 1163.6 L1675.3 1163.3 L1678.3 1163.0 L1681.4 1162.7 L1684.4 1162.3 L1687.5 1162.0 L1690.5 1161.7 L1693.6 1161.3 L1696.6 1160.9 L1699.7 1160.5 L1702.7 1160.1 L1705.8 1159.6 L1708.8 1159.2 L1711.9 1158.6 L1714.9 1158.1 L1718.0 1157.5 L1721.0 1156.9 L1724.1 1156.2 L1727.2 1155.5 L1730.2 1154.7 L1733.3 1153.9 L1736.3 1153.1 L1739.4 1152.2 L1742.4 1151.3 L1745.5 1150.3 L1748.5 1149.3 L1751.6 1148.3 L1754.6 1147.3 L1757.7 1146.3 L1760.7 1145.2 L1763.8 1144.1 L1766.8 1143.1 L1769.9 1142.0 L1772.9 1140.9 L1776.0 1139.8 L1779.0 1138.7 L1782.1 1137.6 L1785.1 1136.5 L1788.2 1135.4 L1791.3 1134.3 L1794.3 1133.3 L1797.4 1132.2 L1800.4 1131.2 L1803.5 1130.2 L1806.5 1129.2 L1809.6 1128.2 L1812.6 1127.2 L1815.7 1126.3 L1818.7 1125.4 L1821.8 1124.5 L1824.8 1123.6 L1827.9 1122.8 L1830.9 1121.9 L1834.0 1121.2 L1837.0 1120.4 L1840.1 1119.7 L1843.1 1119.0 L1846.2 1118.3 L1849.2 1117.7 L1852.3 1117.1 L1855.5 1116.5 L1858.7 1116.0 L1861.9 1115.5 L1865.1 1115.0 L1868.3 1114.7 L1871.5 1114.3 L1874.8 1114.0 L1878.0 1113.8 L1881.2 1113.7 L1884.4 1113.6 L1887.6 1113.5 L1890.8 1113.6 L1894.0 1113.7 L1897.2 1113.9 L1900.4 1114.2 L1903.6 1114.5 L1906.8 1115.0 L1910.0 1115.5 L1913.2 1116.2 L1916.4 1116.9 L1919.6 1117.8 L1922.8 1118.8 L1926.0 1119.9 L1929.2 1121.2 L1932.4 1122.6 L1935.4 1124.1 L1938.4 1125.6 L1941.4 1127.3 L1944.4 1129.1 L1947.4 1131.1 L1950.4 1133.1 L1953.4 1135.2 L1956.5 1137.4 L1959.5 1139.7 L1962.5 1142.1 L1965.5 1144.6 L1968.5 1147.1 L1971.5 1149.7 L1974.5 1152.3 L1977.5 1155.1 L1980.5 1157.8 L1983.5 1160.6 L1986.5 1163.4 L1989.5 1166.3 L1992.5 1169.1 L1995.5 1172.0 L1998.5 1174.8 L2001.5 1177.7 L2004.5 1180.5 L2007.6 1183.3 L2010.6 1186.0 L2013.6 1188.7 L2016.6 1191.4 L2019.6 1193.9 L2022.6 1196.4 L2025.6 1198.8 L2028.6 1201.1 L2031.8 1203.4 L2035.0 1205.6 L2038.2 1207.7 L2041.4 1209.7 L2044.6 1211.5 L2047.8 1213.1 L2051.1 1214.6 L2054.3 1216.0 L2057.5 1217.2 L2060.7 1218.2 L2063.9 1219.1 L2067.1 1219.8 L2070.3 1220.3 L2073.6 1220.7 L2076.9 1220.8 L2080.2 1220.9 L2083.4 1220.8 L2086.7 1220.7 L2090.0 1220.5 L2093.3 1220.3" stroke="#4d86a8"/><path d="M414.6 1449.6 L417.7 1450.3 L420.7 1450.9 L423.8 1451.6 L426.8 1452.3 L429.9 1452.9 L432.9 1453.6 L436.0 1454.3 L439.0 1454.9 L442.1 1455.6 L445.1 1456.2 L448.2 1456.9 L451.3 1457.5 L454.3 1458.2 L457.4 1458.8 L460.4 1459.4 L463.5 1460.0 L466.5 1460.6 L469.6 1461.3 L472.6 1461.8 L475.7 1462.4 L478.7 1463.0 L481.8 1463.6 L484.9 1464.2 L487.9 1464.7 L491.0 1465.3 L494.0 1465.8 L497.1 1466.3 L500.1 1466.8 L503.2 1467.3 L506.2 1467.8 L509.3 1468.3 L512.3 1468.8 L515.4 1469.2 L518.5 1469.6 L521.6 1470.1 L524.6 1470.5 L527.7 1470.9 L530.8 1471.3 L533.9 1471.6 L536.9 1472.0 L540.0 1472.4 L543.1 1472.7 L546.2 1473.1 L549.2 1473.4 L552.3 1473.7 L555.4 1474.0 L558.5 1474.4 L561.5 1474.7 L564.6 1475.0 L567.7 1475.3 L570.8 1475.6 L573.8 1475.9 L576.9 1476.2 L580.0 1476.5 L583.1 1476.8 L586.1 1477.1 L589.2 1477.4 L592.3 1477.7 L595.4 1478.0 L598.5 1478.3 L601.5 1478.6 L604.6 1478.9 L607.7 1479.2 L610.8 1479.5 L613.8 1479.8 L616.9 1480.1 L620.0 1480.4 L623.1 1480.6 L626.1 1480.9 L629.2 1481.1 L632.3 1481.3 L635.4 1481.6 L638.4 1481.7 L641.5 1481.9 L644.6 1482.1 L647.7 1482.2 L650.7 1482.3 L653.8 1482.4 L656.9 1482.4 L660.0 1482.4 L663.0 1482.4 L666.1 1482.4 L669.2 1482.3 L672.4 1482.2 L675.6 1482.0 L678.8 1481.8 L682.0 1481.6 L685.2 1481.3 L688.5 1481.0 L691.7 1480.6 L694.9 1480.1 L698.1 1479.6 L701.3 1479.0 L704.5 1478.4 L707.7 1477.7 L710.7 1477.0 L713.8 1476.2 L716.8 1475.4 L719.8 1474.5 L722.9 1473.6 L725.9 1472.7 L729.0 1471.7 L732.0 1470.7 L735.0 1469.7 L738.1 1468.7 L741.1 1467.7 L744.1 1466.7 L747.2 1465.7 L750.2 1464.8 L753.3 1463.8 L756.3 1462.9 L759.3 1462.0 L762.4 1461.2 L765.4 1460.4 L768.4 1459.7 L771.5 1459.0 L774.5 1458.4 L777.5 1457.8 L780.6 1457.2 L783.6 1456.7 L786.6 1456.3 L789.7 1455.9 L792.7 1455.5 L795.7 1455.2 L798.8 1454.9 L801.8 1454.7 L804.8 1454.5 L807.9 1454.3 L810.9 1454.1 L813.9 1454.0 L817.0 1453.9 L820.0 1453.8 L823.0 1453.7 L826.1 1453.7 L829.1 1453.7 L832.1 1453.7 L835.2 1453.8 L838.2 1453.9 L841.3 1454.0 L844.3 1454.1 L847.3 1454.2 L850.4 1454.4 L853.4 1454.7 L856.4 1454.9 L859.5 1455.2 L862.5 1455.5 L865.6 1455.9 L868.6 1456.3 L871.6 1456.7 L874.7 1457.2 L877.7 1457.7 L880.7 1458.2 L883.8 1458.8 L886.8 1459.4 L889.8 1460.1 L892.9 1460.7 L895.9 1461.4 L899.0 1462.1 L902.0 1462.8 L905.0 1463.5 L908.1 1464.2 L911.1 1464.9 L914.1 1465.6 L917.2 1466.3 L920.2 1467.0 L923.3 1467.7 L926.3 1468.3 L929.3 1468.9 L932.4 1469.5 L935.4 1470.0 L938.5 1470.5 L941.6 1471.0 L944.8 1471.4 L947.9 1471.8 L951.0 1472.1 L954.1 1472.4 L957.3 1472.7 L960.4 1473.0 L963.5 1473.2 L966.6 1473.3 L969.8 1473.5 L972.9 1473.6 L976.0 1473.7 L979.1 1473.8 L982.3 1473.8 L985.4 1473.8 L988.5 1473.8 L991.6 1473.8 L994.7 1473.7 L997.9 1473.6 L1001.0 1473.5 L1004.1 1473.4 L1007.2 1473.2 L1010.3 1473.0 L1013.4 1472.8 L1016.5 1472.6 L1019.7 1472.3 L1022.8 1472.0 L1025.9 1471.7 L1029.0 1471.3 L1032.1 1470.9 L1035.2 1470.5 L1038.3 1470.1 L1041.5 1469.6 L1044.6 1469.1 L1047.7 1468.6 L1050.8 1468.0 L1053.8 1467.4 L1056.8 1466.8 L1059.8 1466.2 L1062.8 1465.5 L1065.8 1464.9 L1068.8 1464.2 L1071.8 1463.5 L1074.8 1462.8 L1077.8 1462.1 L1080.8 1461.4 L1083.8 1460.7 L1086.8 1460.0 L1089.8 1459.3 L1092.8 1458.6 L1095.8 1458.0 L1098.8 1457.4 L1101.9 1456.7 L1104.9 1456.2 L1107.9 1455.6 L1110.9 1455.1 L1113.9 1454.6 L1116.9 1454.2 L1119.9 1453.8 L1122.9 1453.4 L1125.9 1453.1 L1128.9 1452.9 L1131.9 1452.7 L1134.9 1452.5 L1137.9 1452.5 L1140.9 1452.5 L1143.9 1452.6 L1146.9 1452.7 L1149.9 1452.9 L1153.0 1453.2 L1156.0 1453.6 L1159.0 1454.0 L1162.1 1454.5 L1165.1 1455.1 L1168.2 1455.7 L1171.2 1456.4 L1174.2 1457.1 L1177.3 1457.9 L1180.3 1458.7 L1183.3 1459.5 L1186.4 1460.4 L1189.4 1461.3 L1192.5 1462.3 L1195.5 1463.2 L1198.5 1464.2 L1201.6 1465.2 L1204.6 1466.2 L1207.8 1467.3 L1211.0 1468.4 L1214.3 1469.4 L1217.5 1470.5 L1220.7 1471.6 L1223.9 1472.8 L1227.1 1473.9 L1230.3 1475.0 L1233.6 1476.1 L1236.8 1477.2 L1240.0 1478.3 L1243.1 1479.4 L1246.1 1480.4 L1249.2 1481.4 L1252.2 1482.5 L1255.3 1483.5 L1258.3 1484.5 L1261.4 1485.5 L1264.4 1486.5 L1267.5 1487.5 L1270.5 1488.5 L1273.6 1489.4 L1276.6 1490.4 L1279.7 1491.3 L1282.7 1492.1 L1285.8 1493.0 L1288.8 1493.8 L1291.9 1494.7 L1294.9 1495.4 L1298.0 1496.2 L1301.0 1496.9 L1304.1 1497.6 L1307.2 1498.3 L1310.2 1498.9 L1313.3 1499.5 L1316.3 1500.0 L1319.4 1500.5 L1322.4 1501.0 L1325.5 1501.5 L1328.5 1501.9 L1331.6 1502.3 L1334.6 1502.6 L1337.7 1503.0 L1340.7 1503.3 L1343.8 1503.5 L1346.8 1503.8 L1349.9 1504.0 L1352.9 1504.1 L1356.0 1504.3 L1359.0 1504.4 L1362.1 1504.5 L1365.1 1504.6 L1368.2 1504.6 L1371.2 1504.6 L1374.2 1504.6 L1377.2 1504.5 L1380.2 1504.5 L1383.2 1504.4 L1386.2 1504.3 L1389.2 1504.1 L1392.2 1504.0 L1395.3 1503.8 L1398.3 1503.6 L1401.3 1503.3 L1404.3 1503.1 L1407.3 1502.8 L1410.3 1502.5 L1413.3 1502.2 L1416.3 1501.9 L1419.3 1501.5 L1422.3 1501.2 L1425.3 1500.8 L1428.3 1500.4 L1431.3 1499.9 L1434.3 1499.5 L1437.3 1499.1 L1440.4 1498.6 L1443.4 1498.1 L1446.4 1497.6 L1449.4 1497.1 L1452.4 1496.6 L1455.4 1496.1 L1458.4 1495.5 L1461.4 1495.0 L1464.4 1494.4 L1467.4 1493.8 L1470.4 1493.2 L1473.4 1492.6 L1476.4 1492.0 L1479.4 1491.4 L1482.4 1490.8 L1485.4 1490.2 L1488.4 1489.6 L1491.4 1488.9 L1494.4 1488.3 L1497.4 1487.7 L1500.4 1487.0 L1503.4 1486.4 L1506.4 1485.7 L1509.4 1485.1 L1512.5 1484.5 L1515.5 1483.8 L1518.5 1483.2 L1521.5 1482.6 L1524.5 1481.9 L1527.5 1481.3 L1530.5 1480.7 L1533.5 1480.1 L1536.5 1479.5 L1539.5 1478.9 L1542.5 1478.3 L1545.5 1477.8 L1548.5 1477.2 L1551.5 1476.7 L1554.5 1476.1 L1557.5 1475.6 L1560.5 1475.1 L1563.5 1474.6 L1566.5 1474.1 L1569.5 1473.7 L1572.6 1473.2 L1575.6 1472.8 L1578.6 1472.3 L1581.6 1471.9 L1584.6 1471.5 L1587.6 1471.1 L1590.7 1470.7 L1593.7 1470.3 L1596.7 1469.9 L1599.7 1469.6 L1602.7 1469.2 L1605.7 1468.8 L1608.7 1468.5 L1611.8 1468.1 L1614.8 1467.8 L1617.8 1467.4 L1620.8 1467.1 L1623.8 1466.7 L1626.8 1466.4 L1629.8 1466.0 L1632.9 1465.7 L1635.9 1465.3 L1638.9 1465.0 L1641.9 1464.6 L1644.9 1464.2 L1647.9 1463.9 L1651.0 1463.5 L1654.0 1463.1 L1657.0 1462.7 L1660.0 1462.3 L1663.1 1461.9 L1666.1 1461.5 L1669.2 1461.0 L1672.2 1460.6 L1675.3 1460.2 L1678.3 1459.7 L1681.4 1459.3 L1684.4 1458.8 L1687.5 1458.4 L1690.5 1457.9 L1693.6 1457.5 L1696.6 1457.0 L1699.7 1456.6 L1702.7 1456.1 L1705.8 1455.7 L1708.8 1455.3 L1711.9 1454.9 L1714.9 1454.5 L1718.0 1454.1 L1721.0 1453.7 L1724.1 1453.3 L1727.2 1452.9 L1730.2 1452.6 L1733.3 1452.3 L1736.3 1451.9 L1739.4 1451.6 L1742.4 1451.4 L1745.5 1451.1 L1748.5 1450.9 L1751.6 1450.7 L1754.6 1450.5 L1757.7 1450.3 L1760.7 1450.2 L1763.8 1450.1 L1766.8 1450.0 L1769.9 1450.0 L1772.9 1449.9 L1776.0 1450.0 L1779.0 1450.0 L1782.1 1450.1 L1785.1 1450.2 L1788.2 1450.4 L1791.2 1450.6 L1794.2 1450.8 L1797.2 1451.1 L1800.2 1451.4 L1803.2 1451.8 L1806.2 1452.1 L1809.2 1452.6 L1812.2 1453.0 L1815.3 1453.5 L1818.3 1454.0 L1821.3 1454.5 L1824.3 1455.0 L1827.3 1455.6 L1830.3 1456.2 L1833.3 1456.9 L1836.3 1457.5 L1839.4 1458.2 L1842.4 1458.9 L1845.5 1459.6 L1848.5 1460.3 L1851.6 1461.1 L1854.6 1461.8 L1857.7 1462.5 L1860.7 1463.3 L1863.8 1464.0 L1866.8 1464.7 L1869.9 1465.5 L1872.9 1466.2 L1876.0 1466.9 L1879.0 1467.5 L1882.1 1468.2 L1885.1 1468.8 L1888.2 1469.4 L1891.2 1469.9 L1894.3 1470.4 L1897.3 1470.9 L1900.4 1471.3 L1903.5 1471.7 L1906.5 1472.0 L1909.6 1472.3 L1912.6 1472.6 L1915.7 1472.8 L1918.7 1472.9 L1921.8 1473.1 L1924.8 1473.2 L1927.9 1473.3 L1930.9 1473.4 L1934.0 1473.4 L1937.0 1473.5 L1940.1 1473.5 L1943.1 1473.5 L1946.2 1473.5 L1949.2 1473.5 L1952.3 1473.5 L1955.3 1473.5 L1958.4 1473.5 L1961.4 1473.5 L1964.5 1473.5 L1967.7 1473.5 L1970.9 1473.5 L1974.1 1473.6 L1977.3 1473.6 L1980.5 1473.5 L1983.7 1473.5 L1986.9 1473.4 L1990.1 1473.3 L1993.3 1473.1 L1996.5 1472.9 L1999.7 1472.6 L2002.9 1472.2 L2006.1 1471.8 L2009.3 1471.3 L2012.5 1470.9 L2015.7 1470.4 L2019.0 1469.9 L2022.2 1469.5 L2025.4 1469.2 L2028.6 1468.9 L2031.8 1468.7 L2035.0 1468.7 L2038.2 1468.8 L2041.4 1469.1 L2044.6 1469.5 L2047.8 1470.2 L2051.0 1471.0 L2054.2 1472.1 L2057.4 1473.5 L2060.6 1475.1 L2063.8 1477.0 L2067.0 1479.2 L2070.2 1481.6 L2073.4 1484.3 L2076.7 1487.1 L2079.9 1490.0 L2083.1 1493.0 L2086.3 1496.1 L2089.5 1499.2" stroke="#c4dde7"/></svg><div style="position:absolute;left:957.5px;top:882.4px;width:207px;height:95px;border-radius:13px;background:#f3f5f7"></div><svg style="position:absolute;left:978px;top:976px" width="20" height="12" viewBox="0 0 20 12"><path d="M1 0H19L11.5 9.5Q10 11 8.5 9.5Z" fill="#f3f5f7"/></svg><div style="position:absolute;left:971.3px;top:994.1px;width:29.8px;height:29.8px;border-radius:50%;background:#bdd6df;border:3.8px solid #ffffff;box-sizing:border-box"></div><div style="position:absolute;left:2182px;top:690px;width:857px;height:908px;border-radius:30px;background:#22252e;border:2px solid #3c4151"></div><svg style="position:absolute;left:0;top:0" width="3124" height="2048" viewBox="0 0 3124 2048" fill="none" stroke-width="42.5" stroke-linecap="round"><circle cx="2612.8" cy="1129.2" r="249.5" stroke="#363944"/><path d="M2612.80,879.70 A249.5,249.5 0 1 1 2465.51,927.81" stroke="#c1d9e2"/><circle cx="2612.8" cy="1129.2" r="197.5" stroke="#363944"/><path d="M2612.80,931.70 A197.5,197.5 0 1 1 2416.30,1149.02" stroke="#416685"/><circle cx="2612.8" cy="1129.2" r="145.5" stroke="#363944"/><path d="M2612.80,983.70 A145.5,145.5 0 1 1 2531.77,1250.05" stroke="#4c84a7"/></svg><div style="position:absolute;left:2274px;top:1493.5px;width:60.7px;height:30.5px;border-radius:16px;background:#c0d8e1"></div><div style="position:absolute;left:2514.4px;top:1493.5px;width:60.7px;height:30.5px;border-radius:16px;background:#3f6a8a"></div><div style="position:absolute;left:2754.4px;top:1493.5px;width:60.7px;height:30.5px;border-radius:16px;background:#4b87a9"></div><div style="position:absolute;left:225px;top:1698px;width:1905px;height:500px;border-radius:30px;background:#22252e;border:2px solid #3c4151"></div><div style="position:absolute;left:1771.8px;top:1728.3px;width:328px;height:51.3px;border-radius:12px;background:#2c3f4e"></div><svg style="position:absolute;left:2050.5px;top:1743.0px" width="28.0" height="22" viewBox="-2 -2 28.0 22" fill="none" stroke="#c6dfe9" stroke-width="2.2" stroke-linecap="round" stroke-linejoin="round"><path d="M0 9.0H24.0"/><path d="M14.5 0.0L24.0 9.0L14.5 18.0"/></svg><div style="position:absolute;left:375.2px;top:1829px;width:1707.6px;height:2px;background:#373b48"></div><div style="position:absolute;left:375.2px;top:1963.5px;width:1707.6px;height:2px;background:#373b48"></div><div style="position:absolute;left:394.5px;top:1904px;width:92px;height:400px;border-radius:30px 30px 0 0;background:rgba(140,148,155,0.33)"></div><div style="position:absolute;left:539.2px;top:1956px;width:92px;height:400px;border-radius:30px 30px 0 0;background:rgba(140,148,155,0.33)"></div><div style="position:absolute;left:684.0px;top:1958px;width:92px;height:400px;border-radius:30px 30px 0 0;background:rgba(140,148,155,0.33)"></div><div style="position:absolute;left:828.8px;top:2100px;width:92px;height:400px;border-radius:30px 30px 0 0;background:rgba(140,148,155,0.33)"></div><div style="position:absolute;left:973.5px;top:1867.8px;width:92px;height:400px;border-radius:30px 30px 0 0;background:#c1d9e2"></div><div style="position:absolute;left:1118.2px;top:2100px;width:92px;height:400px;border-radius:30px 30px 0 0;background:rgba(140,148,155,0.33)"></div><div style="position:absolute;left:1263.0px;top:2100px;width:92px;height:400px;border-radius:30px 30px 0 0;background:rgba(140,148,155,0.33)"></div><div style="position:absolute;left:1407.8px;top:1958px;width:92px;height:400px;border-radius:30px 30px 0 0;background:rgba(140,148,155,0.33)"></div><div style="position:absolute;left:1552.5px;top:2011px;width:92px;height:400px;border-radius:30px 30px 0 0;background:rgba(140,148,155,0.33)"></div><div style="position:absolute;left:1697.2px;top:2044.5px;width:92px;height:400px;border-radius:30px 30px 0 0;background:rgba(140,148,155,0.33)"></div><div style="position:absolute;left:1842.0px;top:1941.8px;width:92px;height:400px;border-radius:30px 30px 0 0;background:rgba(140,148,155,0.33)"></div><div style="position:absolute;left:1986.8px;top:1841.3px;width:92px;height:400px;border-radius:30px 30px 0 0;background:rgba(140,148,155,0.33)"></div><div style="position:absolute;left:2182px;top:1698px;width:857px;height:500px;border-radius:30px;background:#22252e;border:2px solid #3c4151"></div><div style="position:absolute;left:2290.4px;top:1829.2px;width:724px;height:2px;background:#373b48"></div><div style="position:absolute;left:2290.4px;top:1936.0px;width:724px;height:2px;background:#373b48"></div><div style="position:absolute;left:2290.4px;top:2042.4px;width:724px;height:2px;background:#373b48"></div><div style="position:absolute;left:2301.4px;top:1832.6px;width:37px;height:400px;border-radius:18.5px;background:#363944"></div><div style="position:absolute;left:2301.4px;top:2035.2px;width:37px;height:400px;border-radius:18.5px;background:#97bfd1"></div><div style="position:absolute;left:2430.6px;top:1832.6px;width:37px;height:400px;border-radius:18.5px;background:#363944"></div><div style="position:absolute;left:2430.6px;top:1872.3px;width:37px;height:400px;border-radius:18.5px;background:#97bfd1"></div><div style="position:absolute;left:2559.7px;top:1832.6px;width:37px;height:400px;border-radius:18.5px;background:#363944"></div><div style="position:absolute;left:2559.7px;top:1917.4px;width:37px;height:400px;border-radius:18.5px;background:#97bfd1"></div><div style="position:absolute;left:2688.9px;top:1832.6px;width:37px;height:400px;border-radius:18.5px;background:#363944"></div><div style="position:absolute;left:2688.9px;top:1952px;width:37px;height:400px;border-radius:18.5px;background:#97bfd1"></div><div style="position:absolute;left:2818.0px;top:1832.6px;width:37px;height:400px;border-radius:18.5px;background:#363944"></div><div style="position:absolute;left:2818.0px;top:1855px;width:37px;height:400px;border-radius:18.5px;background:#97bfd1"></div><div style="position:absolute;left:2947.2px;top:1832.6px;width:37px;height:400px;border-radius:18.5px;background:#363944"></div><div style="position:absolute;left:2947.2px;top:1868.2px;width:37px;height:400px;border-radius:18.5px;background:#97bfd1"></div><div style="position:absolute;left:2899.7px;top:1920.2px;width:80px;height:79.5px;border-radius:16px;background:#bebdfa"></div><svg style="position:absolute;left:2919.3px;top:1939.6px" width="40.8" height="40.8" viewBox="0 0 24 24" fill="none" stroke="#ffffff" stroke-width="1.6" stroke-linecap="round" stroke-linejoin="round"><path d="M3.5 5.5l1.5 1.5l2.5-2.5"/><path d="M3.5 11.5l1.5 1.5l2.5-2.5"/><path d="M3.5 17.5l1.5 1.5l2.5-2.5"/><path d="M11 6h9"/><path d="M11 12h9"/><path d="M11 18h9"/></svg><div style="position:absolute;left:2995.9px;top:1920px;width:80px;height:80px;border-radius:40px 40px 4px 40px;background:#bebdfa"></div><svg style="position:absolute;left:2995.9px;top:1920px" width="80" height="80" viewBox="0 0 80 80" fill="none" stroke="#ffffff" stroke-width="3" stroke-linejoin="round" stroke-linecap="round"><path d="M37.8 49H30.9a6 6 0 0 1-6-6V32.8a6 6 0 0 1 6-6H48a6 6 0 0 1 6 6V43a6 6 0 0 1-6 6H45.8V53.6Z"/></svg><div class="t" style="left:225.5px;top:27.2px;font-size:25px;font-weight:400;color:#6e7791;letter-spacing:0.550px;">Qualitätssicherung</div><div class="t" style="left:490.6px;top:27.2px;font-size:25px;font-weight:400;color:#6e7791;letter-spacing:-0.167px;">Region X</div><div class="t" style="left:642.6px;top:27.2px;font-size:25px;font-weight:700;color:#f3f4f6;letter-spacing:-0.002px;">Verkaufsübersicht</div><div class="t" style="left:226.5px;top:71.5px;font-size:50px;font-weight:700;color:#f3f4f6;letter-spacing:-0.023px;">Verkaufsübersicht</div><div class="t" style="left:373.0px;top:182.6px;font-size:27px;font-weight:400;color:#f0f1f5;letter-spacing:0.472px;">Mit Region Y vergleichen</div><div class="t" style="left:253.5px;top:352.9px;font-size:33px;font-weight:400;color:#2b2f3a;letter-spacing:0.012px;">Umsatz</div><div class="t" style="left:957.6px;top:352.9px;font-size:33px;font-weight:400;color:#6d7782;letter-spacing:-0.046px;">Juni 2024</div><div class="t" style="left:254.5px;top:399.7px;font-size:48px;font-weight:700;color:#2d313b;letter-spacing:0.920px;">CHF 284’005</div><div class="t" style="left:1211.0px;top:352.9px;font-size:33px;font-weight:400;color:#d2d5dc;letter-spacing:-0.019px;">Verkaufte Produkte</div><div class="t" style="left:1913.1px;top:352.9px;font-size:33px;font-weight:400;color:#8d929c;letter-spacing:-0.046px;">Juni 2024</div><div class="t" style="left:1210.0px;top:399.7px;font-size:48px;font-weight:700;color:#f7f7f9;letter-spacing:2.917px;">96’346</div><div class="t" style="left:2163.4px;top:352.9px;font-size:33px;font-weight:400;color:#d2d5dc;letter-spacing:0.071px;">Produzierte Produkte</div><div class="t" style="left:2868.6px;top:352.9px;font-size:33px;font-weight:400;color:#8d929c;letter-spacing:-0.046px;">Juni 2024</div><div class="t" style="left:2164.4px;top:399.7px;font-size:48px;font-weight:700;color:#f7f7f9;letter-spacing:0.220px;">CHF 214’005</div><div class="t" style="left:309.0px;top:492.4px;font-size:23px;font-weight:400;color:#9eed7c;letter-spacing:-0.012px;">+2%</div><div class="t" style="left:1264.0px;top:492.4px;font-size:23px;font-weight:400;color:#9eed7c;letter-spacing:-0.012px;">+3%</div><div class="t" style="left:2217.3px;top:492.4px;font-size:23px;font-weight:400;color:#f2a3a8;letter-spacing:1.775px;">-8%</div><div class="t" style="left:2335.8px;top:487.4px;font-size:29px;font-weight:400;color:#c6dfe9;letter-spacing:-0.580px;">Analysieren</div><div class="t" style="left:253.6px;top:734.0px;font-size:33px;font-weight:400;color:#d6d8e0;letter-spacing:-0.012px;">Produktverkäufe über die Zeit</div><div class="t" style="left:1232.5px;top:736.1px;font-size:29px;font-weight:400;color:#d2d5dc;letter-spacing:-0.187px;">Produkt A</div><div class="t" style="left:1473.0px;top:736.1px;font-size:29px;font-weight:400;color:#d2d5dc;letter-spacing:-0.175px;">Produkt B</div><div class="t" style="left:1712.5px;top:736.1px;font-size:29px;font-weight:400;color:#d2d5dc;letter-spacing:-0.062px;">Produkt C</div><div class="t" style="left:1917.8px;top:734.1px;font-size:28px;font-weight:400;color:#ffffff;letter-spacing:0.780px;">Monatlich</div><div class="t" style="left:275.8px;top:854.8px;font-size:25px;font-weight:400;color:#8c92a2;letter-spacing:0.854px;">250’000</div><div class="t" style="left:275.8px;top:1018.6px;font-size:25px;font-weight:400;color:#8c92a2;letter-spacing:0.854px;">200’000</div><div class="t" style="left:275.8px;top:1182.5px;font-size:25px;font-weight:400;color:#8c92a2;letter-spacing:0.854px;">150’000</div><div class="t" style="left:275.8px;top:1346.3px;font-size:25px;font-weight:400;color:#8c92a2;letter-spacing:0.854px;">100’000</div><div class="t" style="left:290.8px;top:1510.1px;font-size:25px;font-weight:400;color:#8c92a2;letter-spacing:0.806px;">50’000</div><div class="t" style="left:435.3px;top:1562.8px;font-size:25px;font-weight:400;color:#8c92a2;letter-spacing:0.000px;">Jan</div><div class="t" style="left:730.9px;top:1562.8px;font-size:25px;font-weight:400;color:#8c92a2;letter-spacing:0.000px;">Feb</div><div class="t" style="left:1029.6px;top:1562.8px;font-size:25px;font-weight:400;color:#8c92a2;letter-spacing:0.000px;">Mar</div><div class="t" style="left:1330.7px;top:1562.8px;font-size:25px;font-weight:400;color:#8c92a2;letter-spacing:0.000px;">Apr</div><div class="t" style="left:1628.6px;top:1562.8px;font-size:25px;font-weight:400;color:#8c92a2;letter-spacing:0.000px;">Mai</div><div class="t" style="left:1926.8px;top:1562.8px;font-size:25px;font-weight:400;color:#8c92a2;letter-spacing:0.000px;">Jun</div><div class="t" style="left:979.0px;top:906.5px;font-size:25px;font-weight:400;color:#3a3e48;letter-spacing:-0.276px;">März 2024</div><div class="t" style="left:980.0px;top:928.9px;font-size:26px;font-weight:700;color:#2c303a;letter-spacing:0.482px;">CHF 202’344</div><div class="t" style="left:2210.8px;top:718.8px;font-size:33px;font-weight:400;color:#d6d8e0;letter-spacing:-0.042px;">Produktionsziele pro Produkt</div><div class="t" style="left:2557.0px;top:1101.8px;font-size:56px;font-weight:700;color:#d6d8e0;letter-spacing:-2.845px;">74%</div><div class="t" style="left:2341.4px;top:1493.8px;font-size:29px;font-weight:400;color:#d2d5dc;letter-spacing:-0.225px;">Produkt A</div><div class="t" style="left:2581.4px;top:1493.8px;font-size:29px;font-weight:400;color:#d2d5dc;letter-spacing:-0.125px;">Produkt B</div><div class="t" style="left:2821.4px;top:1493.8px;font-size:29px;font-weight:400;color:#d2d5dc;letter-spacing:-0.175px;">Produkt C</div><div class="t" style="left:255.5px;top:1727.5px;font-size:33px;font-weight:400;color:#d6d8e0;letter-spacing:-0.068px;">Verkaufte Produkte über die Zeit</div><div class="t" style="left:1801.0px;top:1738.5px;font-size:29px;font-weight:400;color:#c6dfe9;letter-spacing:-0.331px;">Zur Produktansicht</div><div class="t" style="left:267.0px;top:1818.2px;font-size:25px;font-weight:400;color:#8c92a2;letter-spacing:0.771px;">100’000</div><div class="t" style="left:280.2px;top:1952.8px;font-size:25px;font-weight:400;color:#8c92a2;letter-spacing:1.066px;">80’000</div><div class="t" style="left:2210.2px;top:1726.5px;font-size:33px;font-weight:400;color:#d6d8e0;letter-spacing:-0.026px;">Produktionsziele über die Zeit</div><div class="t" style="left:2213.0px;top:1819.3px;font-size:24px;font-weight:400;color:#8c92a2;letter-spacing:-0.014px;">100%</div><div class="t" style="left:2226.5px;top:1926.1px;font-size:24px;font-weight:400;color:#8c92a2;letter-spacing:-0.098px;">80%</div><div class="t" style="left:2226.5px;top:2032.5px;font-size:24px;font-weight:400;color:#8c92a2;letter-spacing:-0.098px;">60%</div>
</body></html>
